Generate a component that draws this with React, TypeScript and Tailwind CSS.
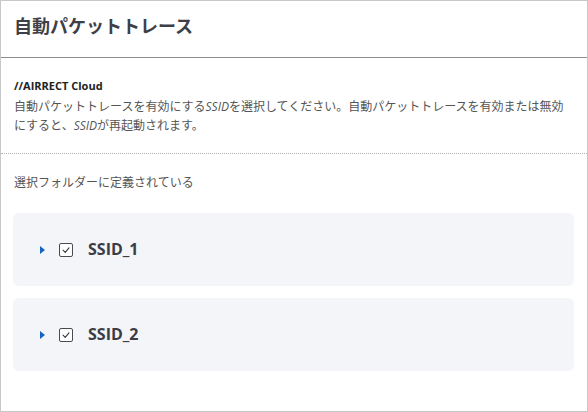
const ssids = ["SSID_1", "SSID_2"];

const CheckBox = () => (
  <span className="flex h-[14px] w-[14px] items-center justify-center rounded-[2px] border border-[#4a4a52] bg-white">
    <svg width="10" height="10" viewBox="0 0 10 10" fill="none">
      <path d="M2 5.2 L4.2 7.3 L8 2.8" stroke="#3a3a42" strokeWidth="1.1" strokeLinecap="round" strokeLinejoin="round" />
    </svg>
  </span>
);

const SsidRow = ({ name }: { name: string }) => (
  <div className="flex h-[73px] items-center rounded-[6px] bg-[#f4f5f9] pl-[27px]">
    <svg width="5" height="8" viewBox="0 0 5 8" className="mt-[1px]">
      <path d="M0 0 L5 4 L0 8 Z" fill="#1565c0" />
    </svg>
    <span className="ml-[14px]">
      <CheckBox />
    </span>
    <span className="mb-[2px] ml-[15px] text-[16px] font-bold text-[#3c3c46]">{name}</span>
  </div>
);

export default function App() {
  return (
    <div
      className="h-[412px] w-[588px] border border-[#c8c8c8] bg-white text-[#444]"
      style={{ fontFamily: '"Open Sans", "Noto Sans CJK JP", sans-serif' }}
    >
      <div className="flex h-[57px] items-start border-b border-[#8c8c8c] px-[13px] pt-[9px]">
        <h1
          className="text-[18px] font-bold leading-[30px] text-[#3f3f48]"
          style={{ fontFamily: '"Noto Sans CJK JP", sans-serif' }}
        >
          自動パケットトレース
        </h1>
      </div>

      <div className="border-b border-dotted border-[#b0b0b0] px-[13px] pb-[18px] pt-[20px]">
        <p className="text-[11px] font-bold leading-[16px] text-[#222]">//AIRRECT Cloud</p>
        <p className="mt-[3px] text-[12px] leading-[18px] text-[#555]" style={{ fontFamily: '"Noto Sans CJK JP", sans-serif' }}>
          自動パケットトレースを有効にする<i style={{ fontFamily: '"Open Sans", sans-serif' }}>SSID</i>を選択してください。自動パケットトレースを有効または無効にすると、<i style={{ fontFamily: '"Open Sans", sans-serif' }}>SSID</i>が再起動されます。
        </p>
      </div>

      <div className="px-[12px] pt-[19px]">
        <p className="pl-[1px] text-[12px] leading-[18px] text-[#555]" style={{ fontFamily: '"Noto Sans CJK JP", sans-serif' }}>
          選択フォルダーに定義されている
        </p>
        <div className="mt-[22px] flex flex-col gap-[12px] pr-[1px]">
          {ssids.map((s) => (
            <SsidRow key={s} name={s} />
          ))}
        </div>
      </div>
    </div>
  );
}
